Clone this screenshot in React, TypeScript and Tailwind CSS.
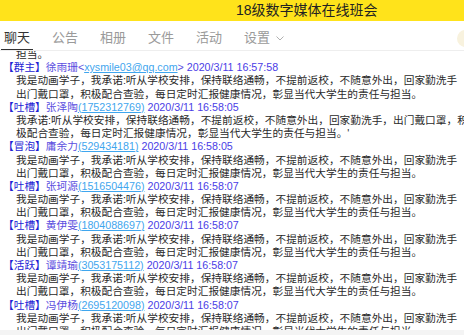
import React from "react";

type Msg = {
  tag: string;
  name: string;
  id: string;
  email?: boolean;
  time: string;
  lines: string[];
};

const L1 = "我是动画学子，我承诺:听从学校安排，保持联络通畅，不提前返校，不随意外出，回家勤洗手";
const L2 = "出门戴口罩，积极配合查验，每日定时汇报健康情况，彰显当代大学生的责任与担当。";

const msgs: Msg[] = [
  { tag: "群主", name: "徐雨珊", id: "xysmile03@qq.com", email: true, time: "2020/3/11 16:57:58", lines: [L1, L2] },
  {
    tag: "吐槽",
    name: "张泽陶",
    id: "1752312769",
    time: "2020/3/11 16:58:05",
    lines: [
      "我承诺:听从学校安排，保持联络通畅，不提前返校，不随意外出，回家勤洗手，出门戴口罩，积",
      "极配合查验，每日定时汇报健康情况，彰显当代大学生的责任与担当。'",
    ],
  },
  { tag: "冒泡", name: "庸余力", id: "529434181", time: "2020/3/11 16:58:05", lines: [L1, L2] },
  { tag: "吐槽", name: "张珂源", id: "1516504476", time: "2020/3/11 16:58:07", lines: [L1, L2] },
  { tag: "吐槽", name: "黄伊雯", id: "1804088697", time: "2020/3/11 16:58:07", lines: [L1, L2] },
  { tag: "活跃", name: "谭靖瑜", id: "3053175112", time: "2020/3/11 16:58:07", lines: [L1, L2] },
  { tag: "吐槽", name: "冯伊杨", id: "2695120098", time: "2020/3/11 16:58:07", lines: [L1, L2] },
];

function Header({ m }: { m: Msg }) {
  return (
    <div className="whitespace-nowrap pl-[3px] h-[13.2px] leading-[13.2px]">
      <span className="text-[#2323d4]">【{m.tag}】</span>
      <span className="text-[#5a4de0]">{m.name}</span>
      {m.email ? (
        <>
          <span className="text-[#5a4de0]">&lt;</span>
          <span className="text-[#3fa6ee] underline">{m.id}</span>
          <span className="text-[#5a4de0]">&gt;</span>
        </>
      ) : (
        <span className="text-[#3fa6ee] underline">({m.id})</span>
      )}
      <span className="text-[#4a3de6]"> {m.time}</span>
    </div>
  );
}

export default function App() {
  const tabs = ["聊天", "公告", "相册", "文件", "活动"];
  return (
    <div className="w-[464px] h-[335px] overflow-hidden bg-white font-['Liberation_Sans','Noto_Sans_CJK_SC',sans-serif] flex flex-col">
      <div className="h-[21px] shrink-0 bg-[#ffe31b] flex items-center pl-[236px] text-[14px] text-[#222]">
        18级数字媒体在线班会
      </div>
      <div className="h-[30px] shrink-0 border-b border-[#eeeeee] flex items-stretch pl-[4px] gap-[22px] text-[13px]">
        {tabs.map((t, i) => (
          <div
            key={t}
            className={
              i === 0
                ? "flex items-center pt-[5px] text-[#333] border-b-[1.5px] border-[#333] -mx-[3px] px-[3px]"
                : "flex items-center pt-[5px] text-[#9a9a9a]"
            }
          >
            {t}
          </div>
        ))}
        <div className="flex items-center pt-[5px] text-[#9a9a9a] gap-[6px]">
          设置
          <svg width="8" height="5" viewBox="0 0 8 5" className="mt-[1px]">
            <path d="M0.5 0.5 L4 4 L7.5 0.5" fill="none" stroke="#b0b0b0" strokeWidth="1" />
          </svg>
        </div>
        <div className="ml-auto self-center mt-[5px] w-[17px] h-[17px] rounded-full bg-[#f8f2de] -mr-[10px] shrink-0" />
      </div>
      <div className="flex-1 overflow-hidden text-[10.7px]">
        <div className="-mt-[3px]">
          <div className="whitespace-nowrap pl-[16px] h-[13.2px] leading-[13.2px] text-[#2a2a2a]">担当。</div>
          {msgs.map((m, i) => (
            <div key={i}>
              <Header m={m} />
              {m.lines.map((l, j) => (
                <div key={j} className="whitespace-nowrap pl-[16px] h-[13.2px] leading-[13.2px] text-[#2a2a2a]">
                  {l}
                </div>
              ))}
            </div>
          ))}
        </div>
      </div>
      <div className="h-[5px] shrink-0 bg-[#f4f4f4]" />
    </div>
  );
}
